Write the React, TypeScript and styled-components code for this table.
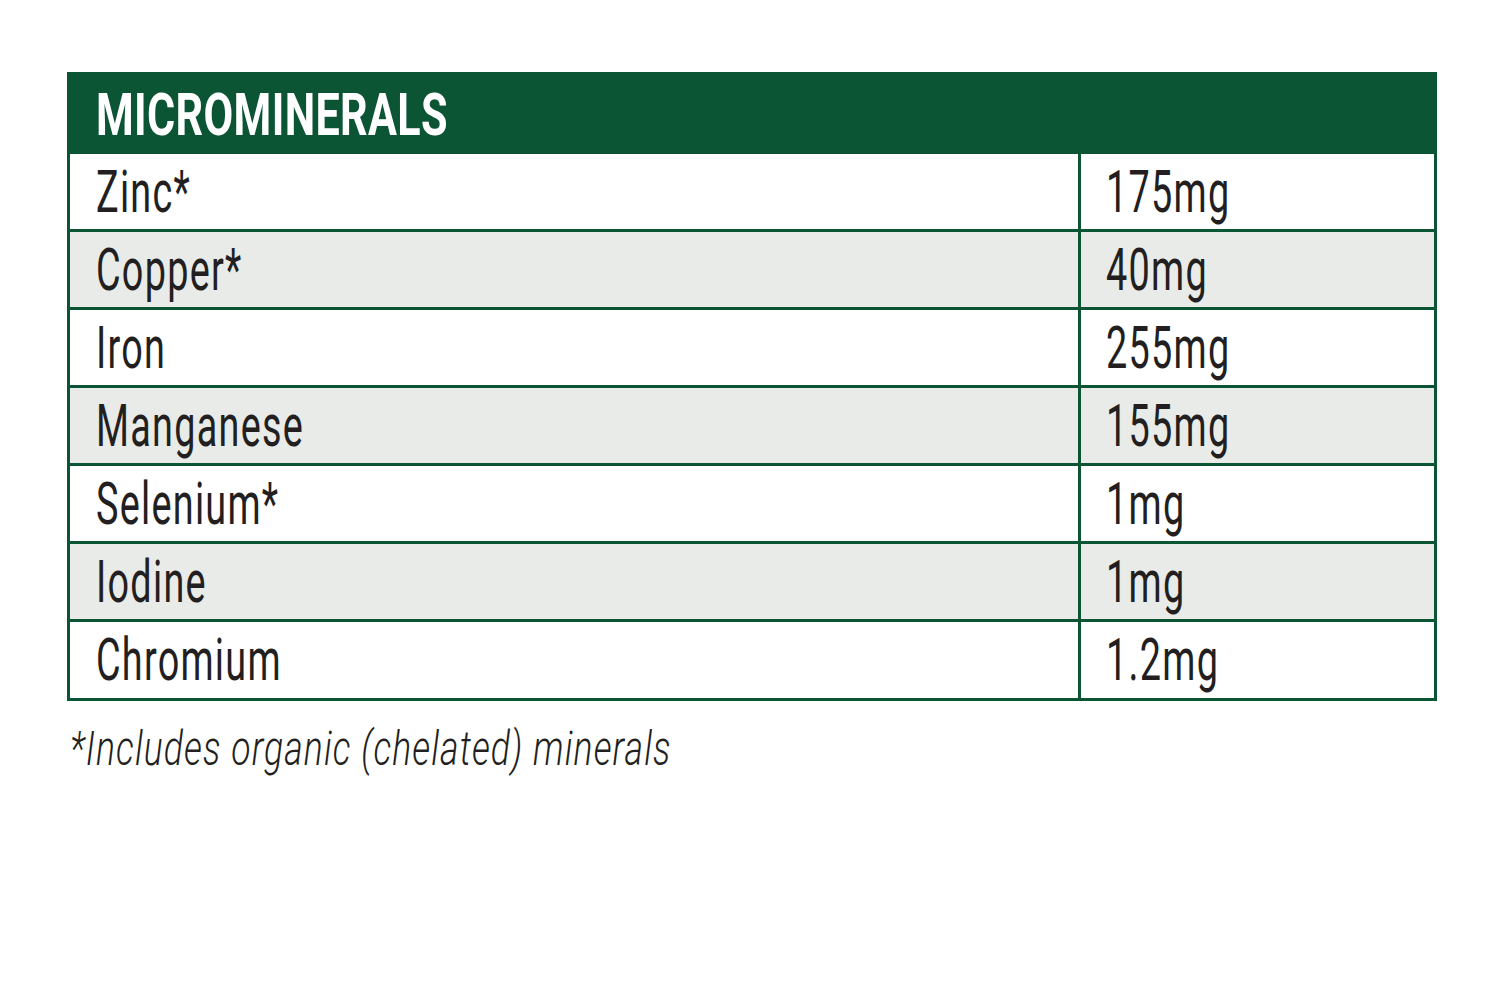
import React from 'react'
import styled, { createGlobalStyle } from 'styled-components'

const GlobalStyle = createGlobalStyle`
  html, body {
    margin: 0;
    padding: 0;
    background: #ffffff;
  }
  body {
    font-family: Roboto, 'Liberation Sans', sans-serif;
    color: #231f20;
  }
`

const GREEN = '#0b5434'

const Page = styled.div`
  width: 1500px;
  height: 1003px;
  padding: 72px 0 0 67px;
  box-sizing: border-box;
`

const Table = styled.div`
  width: 1370px;
  box-sizing: border-box;
  border: 3px solid ${GREEN};
  display: grid;
  grid-template-columns: 1011px 1fr;
`

const Header = styled.div`
  grid-column: 1 / -1;
  height: 79px;
  background: ${GREEN};
  display: flex;
  align-items: center;
  padding-left: 26px;
  overflow: hidden;
`

const HeaderText = styled.span`
  display: inline-block;
  color: #ffffff;
  font-weight: 700;
  font-size: 59px;
  line-height: 1;
  letter-spacing: 0.5px;
  transform: scaleX(0.73);
  transform-origin: left center;
  white-space: nowrap;
`

const Cell = styled.div<{ $shaded: boolean; $last: boolean; $first: boolean }>`
  height: ${(p) => (p.$last ? 76 : 75)}px;
  background: ${(p) => (p.$shaded ? '#e8ebe8' : '#ffffff')};
  border-bottom: ${(p) => (p.$last ? 'none' : `3px solid ${GREEN}`)};
  border-right: ${(p) => (p.$first ? `3px solid ${GREEN}` : 'none')};
  display: flex;
  align-items: center;
  padding-left: ${(p) => (p.$first ? 26 : 25)}px;
  overflow: hidden;
`

const CellText = styled.span`
  display: inline-block;
  font-weight: 400;
  font-size: 60px;
  line-height: 1;
  letter-spacing: 2px;
  color: #231f20;
  transform: scaleX(0.63);
  transform-origin: left center;
  white-space: nowrap;
`

const Note = styled.div`
  margin-top: 18px;
  padding-left: 3px;
  height: 60px;
  display: flex;
  align-items: center;
`

const NoteText = styled.span`
  display: inline-block;
  font-weight: 300;
  font-style: italic;
  font-size: 48px;
  line-height: 1;
  letter-spacing: 1.5px;
  color: #231f20;
  transform: scaleX(0.74);
  transform-origin: left center;
  white-space: nowrap;
`

const rows: [string, string][] = [
  ['Zinc*', '175mg'],
  ['Copper*', '40mg'],
  ['Iron', '255mg'],
  ['Manganese', '155mg'],
  ['Selenium*', '1mg'],
  ['Iodine', '1mg'],
  ['Chromium', '1.2mg'],
]

export default function App() {
  return (
    <>
      <GlobalStyle />
      <Page>
        <Table>
          <Header>
            <HeaderText>MICROMINERALS</HeaderText>
          </Header>
          {rows.map(([name, amount], i) => {
            const shaded = i % 2 === 1
            const last = i === rows.length - 1
            return (
              <React.Fragment key={name}>
                <Cell $shaded={shaded} $last={last} $first>
                  <CellText>{name}</CellText>
                </Cell>
                <Cell $shaded={shaded} $last={last} $first={false}>
                  <CellText>{amount}</CellText>
                </Cell>
              </React.Fragment>
            )
          })}
        </Table>
        <Note>
          <NoteText>*Includes organic (chelated) minerals</NoteText>
        </Note>
      </Page>
    </>
  )
}
